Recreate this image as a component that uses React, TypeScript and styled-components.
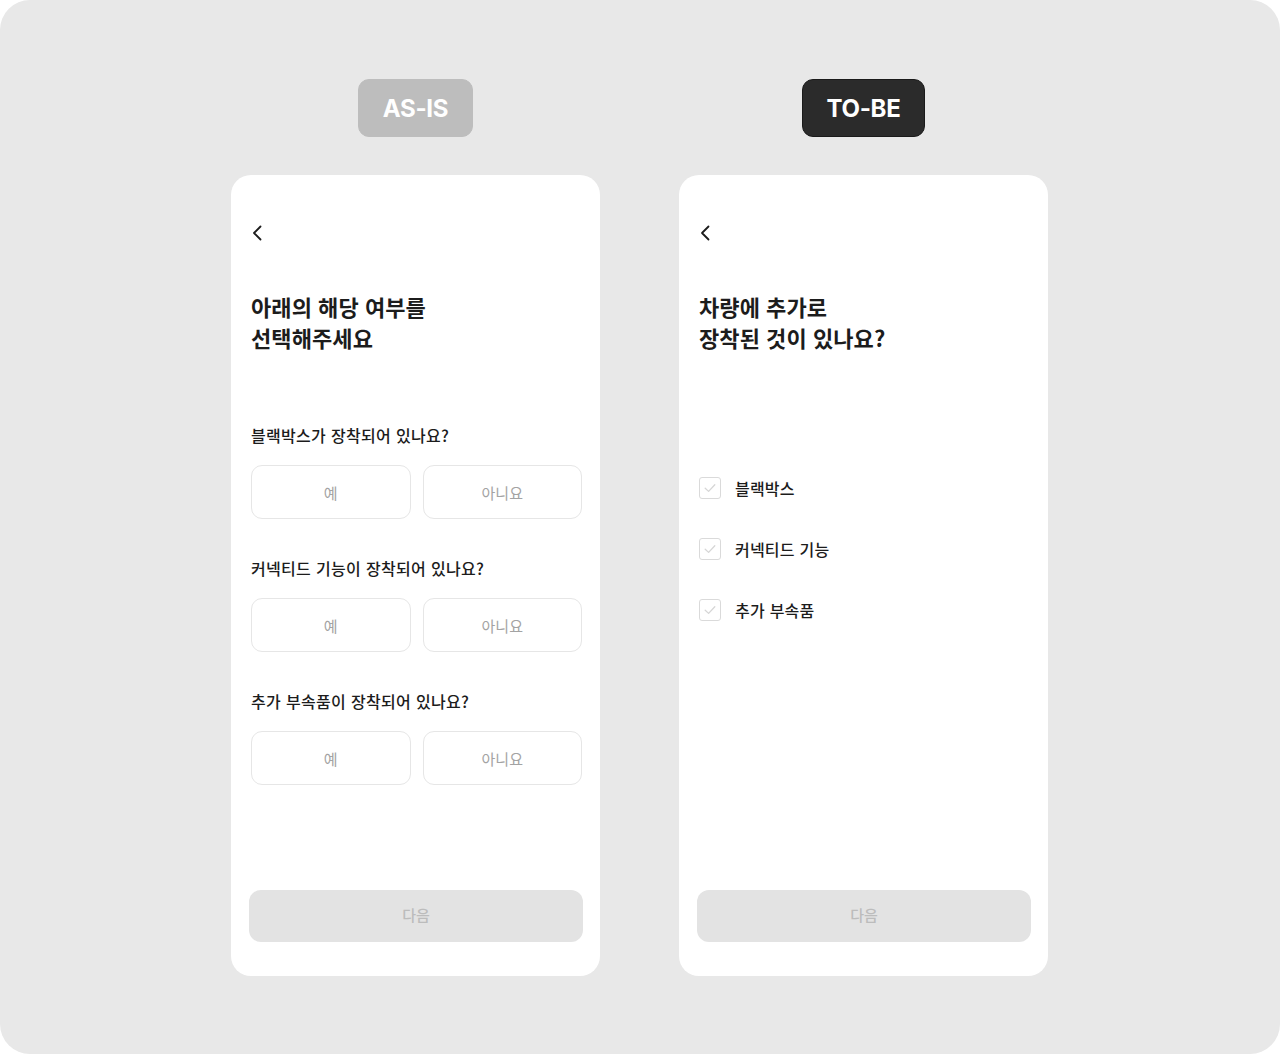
import React from "react";
import styled, { createGlobalStyle } from "styled-components";

const GlobalStyle = createGlobalStyle`
  html, body {
    margin: 0;
    padding: 0;
    background: #ffffff;
  }
  body {
    font-family: "Noto Sans CJK KR", "Noto Sans", sans-serif;
    -webkit-font-smoothing: antialiased;
  }
`;

const Canvas = styled.div`
  width: 1280px;
  height: 1054px;
  box-sizing: border-box;
  background: #e8e8e8;
  border-radius: 30px;
  display: flex;
  gap: 79px;
  padding: 79px 0 0 231px;
`;

const Column = styled.div`
  width: 369px;
  display: flex;
  flex-direction: column;
  align-items: center;
  gap: 38px;
`;

const Badge = styled.div<{ $dark?: boolean }>`
  height: 58px;
  box-sizing: border-box;
  padding: 0 24px;
  border-radius: 11px;
  display: flex;
  align-items: center;
  justify-content: center;
  font-family: Inter, "Noto Sans", sans-serif;
  font-weight: 700;
  font-size: 24px;
  letter-spacing: -0.3px;
  color: #ffffff;
  background: ${(p) => (p.$dark ? "#2b2b2b" : "#bdbdbd")};
  border: 1px solid ${(p) => (p.$dark ? "#1a1a1a" : "#bdbdbd")};
`;

const Phone = styled.div`
  width: 369px;
  height: 801px;
  box-sizing: border-box;
  background: #ffffff;
  border-radius: 20px;
  display: flex;
  flex-direction: column;
  padding: 0 17px 34px 18px;
`;

const BackButton = styled.div`
  margin: 46px 0 0 3px;
  width: 24px;
  height: 24px;
  display: flex;
  align-items: center;
  justify-content: flex-start;
`;

const Title = styled.h1`
  margin: 46px 0 0 2px;
  font-size: 22px;
  line-height: 31px;
  font-weight: 700;
  letter-spacing: 0.1px;
  word-spacing: 1px;
  color: #1c1c1c;
`;

const QuestionList = styled.div`
  margin: 71px 1px 0 2px;
  display: flex;
  flex-direction: column;
  gap: 38px;
`;

const Question = styled.div`
  display: flex;
  flex-direction: column;
  gap: 19px;
`;

const QuestionLabel = styled.div`
  font-size: 16px;
  line-height: 22px;
  font-weight: 500;
  letter-spacing: 0.3px;
  word-spacing: 1px;
  color: #1c1c1c;
`;

const ChoiceRow = styled.div`
  display: grid;
  grid-template-columns: 1fr 1fr;
  gap: 12px;
`;

const Choice = styled.div`
  height: 54px;
  box-sizing: border-box;
  border: 1px solid #e6e6e6;
  border-radius: 11px;
  display: flex;
  align-items: center;
  justify-content: center;
  font-size: 15px;
  color: #a3a3a3;
`;

const CheckList = styled.div`
  margin: 124px 2px 0 2px;
  display: flex;
  flex-direction: column;
  gap: 39px;
`;

const CheckRow = styled.div`
  display: flex;
  align-items: center;
  gap: 14px;
  height: 22px;
`;

const CheckBox = styled.div`
  width: 22px;
  height: 22px;
  box-sizing: border-box;
  border: 1px solid #dadada;
  border-radius: 3px;
  display: flex;
  align-items: center;
  justify-content: center;
`;

const CheckLabel = styled.div`
  font-size: 16px;
  font-weight: 500;
  letter-spacing: 0.2px;
  word-spacing: 1px;
  color: #1c1c1c;
`;

const NextButton = styled.div`
  margin-top: auto;
  height: 52px;
  border-radius: 12px;
  background: #e3e3e3;
  display: flex;
  align-items: center;
  justify-content: center;
  font-size: 15px;
  line-height: 20px;
  font-weight: 500;
  color: #bcbcbc;
  padding-bottom: 3px;
  box-sizing: border-box;
`;

const Chevron = () => (
  <svg width="20" height="20" viewBox="0 0 20 20" fill="none">
    <path d="M8.5 3.5 L2 10 L8.5 16.5" stroke="#1c1c1c" strokeWidth="1.8" strokeLinecap="round" strokeLinejoin="round" />
  </svg>
);

const Tick = () => (
  <svg width="14" height="14" viewBox="0 0 14 14" fill="none">
    <path d="M2.2 7.2 L5.6 10.4 L11.8 3.8" stroke="#d6d6d6" strokeWidth="1.3" strokeLinecap="round" strokeLinejoin="round" />
  </svg>
);

const questions = [
  "블랙박스가 장착되어 있나요?",
  "커넥티드 기능이 장착되어 있나요?",
  "추가 부속품이 장착되어 있나요?",
];

const options = ["블랙박스", "커넥티드 기능", "추가 부속품"];

export default function App() {
  return (
    <>
      <GlobalStyle />
      <Canvas>
        <Column>
          <Badge>AS-IS</Badge>
          <Phone>
            <BackButton>
              <Chevron />
            </BackButton>
            <Title>
              아래의 해당 여부를
              <br />
              선택해주세요
            </Title>
            <QuestionList>
              {questions.map((q) => (
                <Question key={q}>
                  <QuestionLabel>{q}</QuestionLabel>
                  <ChoiceRow>
                    <Choice>예</Choice>
                    <Choice>아니요</Choice>
                  </ChoiceRow>
                </Question>
              ))}
            </QuestionList>
            <NextButton>다음</NextButton>
          </Phone>
        </Column>
        <Column>
          <Badge $dark>TO-BE</Badge>
          <Phone>
            <BackButton>
              <Chevron />
            </BackButton>
            <Title>
              차량에 추가로
              <br />
              장착된 것이 있나요?
            </Title>
            <CheckList>
              {options.map((o) => (
                <CheckRow key={o}>
                  <CheckBox>
                    <Tick />
                  </CheckBox>
                  <CheckLabel>{o}</CheckLabel>
                </CheckRow>
              ))}
            </CheckList>
            <NextButton>다음</NextButton>
          </Phone>
        </Column>
      </Canvas>
    </>
  );
}
